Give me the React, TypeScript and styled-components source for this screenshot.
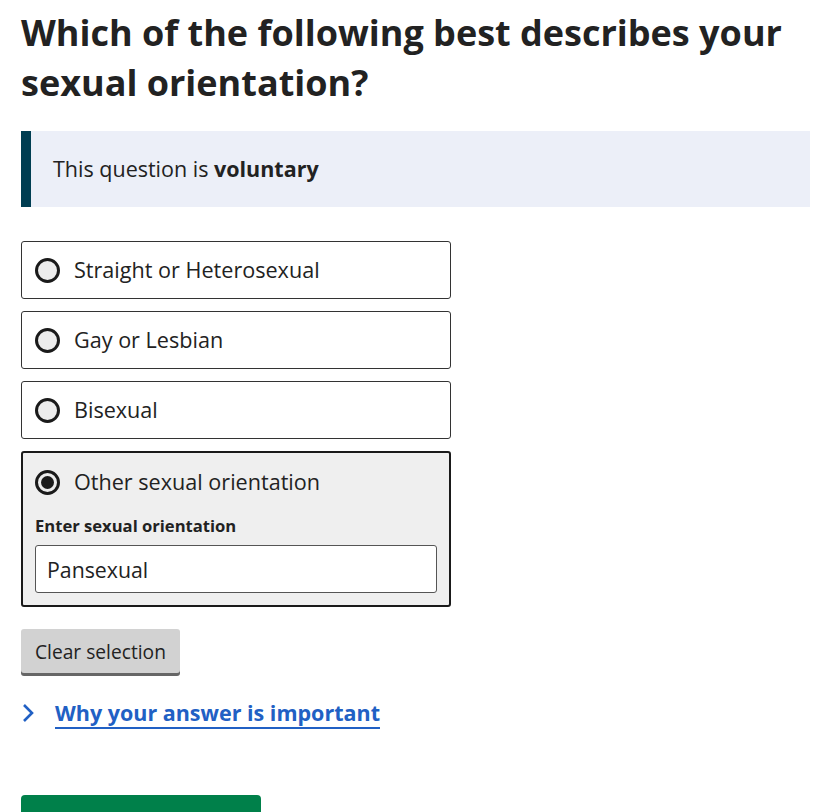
import React, { useState } from "react";
import styled, { createGlobalStyle } from "styled-components";

const GlobalStyle = createGlobalStyle`
  body {
    margin: 0;
    background: #ffffff;
    font-family: "Open Sans", "Noto Sans", Arial, sans-serif;
    color: #222222;
  }
`;

const Page = styled.div`
  padding: 8px 18px 0 21px;
`;

const Heading = styled.h1`
  margin: 0 0 23px;
  font-size: 36px;
  line-height: 50px;
  font-weight: 700;
  color: #222222;
`;

const Callout = styled.div`
  background: #eceff8;
  border-left: 10px solid #003e52;
  padding: 24px 22px;
  font-size: 21.5px;
  line-height: 28px;
  margin-bottom: 34px;
`;

const Options = styled.div`
  display: flex;
  flex-direction: column;
  gap: 12px;
  width: 430px;
`;

const OptionBox = styled.div<{ $selected?: boolean }>`
  border: ${(p) => (p.$selected ? "2px solid #1a1a1a" : "1px solid #333333")};
  border-radius: 3px;
  background: ${(p) => (p.$selected ? "#efefef" : "#ffffff")};
  padding: ${(p) => (p.$selected ? "15px 12px 12px" : "14px 13px")};
`;

const RadioRow = styled.label`
  display: flex;
  align-items: center;
  gap: 14px;
  font-size: 21.6px;
  line-height: 28px;
  cursor: pointer;
`;

const Radio = styled.span<{ $checked?: boolean }>`
  box-sizing: border-box;
  width: 25px;
  height: 25px;
  border-radius: 50%;
  border: 3px solid #1a1a1a;
  background: #ececec;
  flex-shrink: 0;
  display: flex;
  align-items: center;
  justify-content: center;
  &::after {
    content: "";
    display: ${(p) => (p.$checked ? "block" : "none")};
    width: 13px;
    height: 13px;
    border-radius: 50%;
    background: #1a1a1a;
  }
`;

const FieldLabel = styled.div`
  margin-top: 19px;
  font-size: 16.6px;
  line-height: 22px;
  font-weight: 700;
  color: #222222;
`;

const TextInput = styled.input`
  box-sizing: border-box;
  display: block;
  width: 100%;
  height: 48px;
  margin-top: 8px;
  border: 1px solid #555555;
  border-radius: 3px;
  background: #ffffff;
  padding: 0 11px;
  font-family: inherit;
  font-size: 21.3px;
  color: #222222;
`;

const ClearButton = styled.button`
  margin-top: 22px;
  height: 44px;
  padding: 0 14px;
  border: none;
  border-radius: 3px;
  background: #d2d2d2;
  box-shadow: 0 3px 0 #666666;
  font-family: inherit;
  font-size: 19.2px;
  color: #222222;
  cursor: pointer;
`;

const Disclosure = styled.div`
  margin-top: 26px;
  display: flex;
  align-items: center;
  gap: 20px;
`;

const LinkText = styled.a`
  font-size: 21.5px;
  line-height: 28px;
  font-weight: 700;
  color: #2160c4;
  text-decoration: underline;
  text-underline-offset: 6px;
  text-decoration-thickness: 2px;
`;

const PrimaryButton = styled.button`
  margin-top: 68px;
  width: 240px;
  height: 76px;
  border: none;
  border-radius: 4px;
  background: #00804a;
  color: #ffffff;
  font-family: inherit;
  font-size: 20px;
  font-weight: 700;
`;

const options = [
  "Straight or Heterosexual",
  "Gay or Lesbian",
  "Bisexual",
  "Other sexual orientation",
];

export default function App() {
  const [selected, setSelected] = useState(3);
  const [other, setOther] = useState("Pansexual");

  return (
    <Page>
      <GlobalStyle />
      <Heading>Which of the following best describes your sexual orientation?</Heading>
      <Callout>
        This question is <b>voluntary</b>
      </Callout>
      <Options>
        {options.map((o, i) => (
          <OptionBox key={o} $selected={selected === i}>
            <RadioRow onClick={() => setSelected(i)}>
              <Radio $checked={selected === i} />
              {o}
            </RadioRow>
            {selected === i && i === 3 && (
              <>
                <FieldLabel>Enter sexual orientation</FieldLabel>
                <TextInput value={other} onChange={(e) => setOther(e.target.value)} />
              </>
            )}
          </OptionBox>
        ))}
      </Options>
      <ClearButton onClick={() => setSelected(-1)}>Clear selection</ClearButton>
      <Disclosure>
        <svg width="14" height="20" viewBox="0 0 14 20">
          <path d="M3 2 L11 10 L3 18" fill="none" stroke="#2160c4" strokeWidth="2.6" />
        </svg>
        <LinkText href="#">Why your answer is important</LinkText>
      </Disclosure>
      <PrimaryButton>Continue</PrimaryButton>
    </Page>
  );
}
